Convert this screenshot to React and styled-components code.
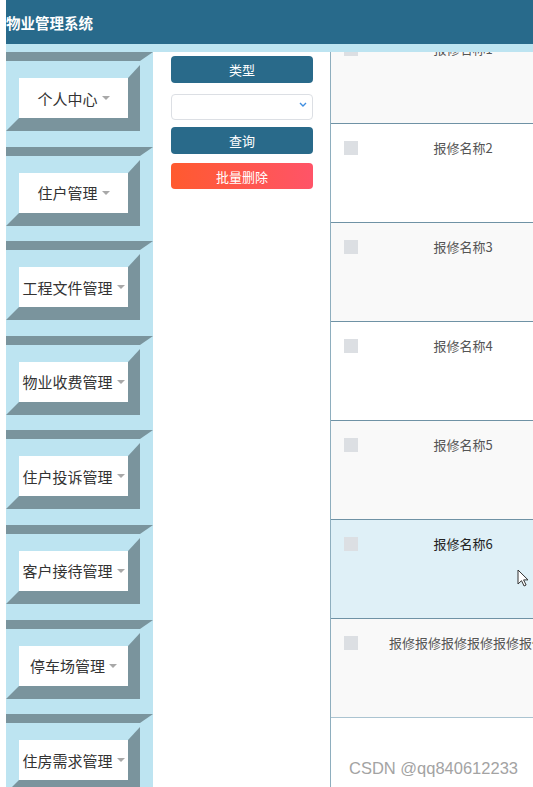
import React from 'react';
import styled, { createGlobalStyle } from 'styled-components';

const GlobalStyle = createGlobalStyle`
  html, body {
    margin: 0;
    padding: 0;
    background: #fff;
  }
  body {
    font-family: "Noto Sans CJK SC", "Noto Sans", sans-serif;
  }
`;

const Page = styled.div`
  position: relative;
  height: 787px;
  padding-left: 6px;
  overflow: hidden;
`;

const Header = styled.header`
  height: 44px;
  border-bottom: 8px solid #bde4f1;
  background: #286a8b;
  display: flex;
  align-items: center;
  color: #fff;
  font-size: 14.5px;
  font-weight: bold;
`;

const Body = styled.div`
  display: flex;
  height: 735px;
`;

const Sidebar = styled.nav`
  width: 147px;
  flex-shrink: 0;
  background: #bde4f1;
`;

const NavItem = styled.div`
  border-top: 9px solid #7a949d;
  border-right: 13px solid #bde4f1;
  padding: 4px 0 15.6px;
`;

const NavInner = styled.div`
  height: 40px;
  border-style: solid;
  border-width: 13px 12px 13px 13px;
  border-color: #bde4f1 #7a949d #7a949d #bde4f1;
  background: #fff;
  display: flex;
  align-items: center;
  justify-content: center;
  color: #333;
  font-size: 15px;
  white-space: nowrap;
`;

const Caret = styled.span`
  margin-left: 4px;
  width: 0;
  height: 0;
  border-top: 4px solid #a8a8a8;
  border-left: 4px solid transparent;
  border-right: 4px solid transparent;
`;

const Filter = styled.div`
  width: 142px;
  flex-shrink: 0;
  padding: 4px 17px 0 18px;
  display: flex;
  flex-direction: column;
  gap: 9px;
`;

const Button = styled.button`
  height: ${p => (p.$danger ? 26 : 27)}px;
  border: none;
  border-radius: 4px;
  background: ${p => (p.$danger ? 'linear-gradient(90deg, #ff5a2f, #ff5468)' : '#296a8a')};
  color: #fff;
  font-family: inherit;
  font-size: 13px;
  padding: 0;
  cursor: pointer;
`;

const SelectWrap = styled.div`
  position: relative;
  height: 26px;
`;

const Select = styled.select`
  width: 100%;
  height: 100%;
  box-sizing: border-box;
  border: 1px solid #dcdfe4;
  border-radius: 4px;
  background: #fff;
  appearance: none;
  outline: none;
`;

const Chevron = styled.svg`
  position: absolute;
  right: 6px;
  top: 10px;
  pointer-events: none;
`;

const List = styled.div`
  flex: 1;
  border-left: 1px solid #8eaebe;
  overflow: hidden;
`;

const ListInner = styled.div`
  margin-top: -27px;
`;

const Row = styled.div`
  position: relative;
  display: flex;
  align-items: flex-start;
  height: 81px;
  padding: 17px 0 0 13px;
  border-bottom: 1px solid ${p => (p.$last ? '#abc4d1' : '#6f92a5')};
  background: ${p => p.$bg};
`;

const Check = styled.span`
  width: 14px;
  height: 14px;
  flex-shrink: 0;
  background: #dcdfe3;
`;

const Name = styled.div`
  width: 148px;
  flex-shrink: 0;
  margin-left: 31px;
  text-align: center;
  white-space: nowrap;
  font-size: 13px;
  line-height: 14px;
  color: ${p => (p.$hover ? '#222' : '#555')};
`;

const Pointer = styled.svg`
  position: absolute;
  left: 186px;
  top: 49px;
`;

const Watermark = styled.div`
  position: absolute;
  right: 15px;
  top: 759px;
  font-family: "Liberation Sans", Arial, sans-serif;
  font-size: 16.5px;
  color: #a3a3a3;
  text-shadow: 0 0 2px #fff;
`;

const menus = ['个人中心', '住户管理', '工程文件管理', '物业收费管理', '住户投诉管理', '客户接待管理', '停车场管理', '住房需求管理'];

const repairs = [
  { name: '报修名称1', bg: '#f9f9f9' },
  { name: '报修名称2', bg: '#fff' },
  { name: '报修名称3', bg: '#f9f9f9' },
  { name: '报修名称4', bg: '#fff' },
  { name: '报修名称5', bg: '#f9f9f9' },
  { name: '报修名称6', bg: '#dff0f7', hover: true },
  { name: '报修报修报修报修报修报修报修报修', bg: '#f9f9f9' },
];

export default function App() {
  return (
    <Page>
      <GlobalStyle />
      <Header>物业管理系统</Header>
      <Body>
        <Sidebar>
          {menus.map(m => (
            <NavItem key={m}>
              <NavInner>
                {m}
                <Caret />
              </NavInner>
            </NavItem>
          ))}
        </Sidebar>
        <Filter>
          <Button>类型</Button>
          <SelectWrap>
            <Select defaultValue="">
              <option value=""></option>
            </Select>
            <Chevron width="8" height="5" viewBox="0 0 8 5">
              <path d="M1 1l3 3 3-3" fill="none" stroke="#3f8ee0" strokeWidth="1.4" />
            </Chevron>
          </SelectWrap>
          <Button>查询</Button>
          <Button $danger>批量删除</Button>
        </Filter>
        <List>
          <ListInner>
            {repairs.map((r, i) => (
              <Row key={i} $bg={r.bg} $last={i === repairs.length - 1}>
                <Check />
                <Name $hover={r.hover}>{r.name}</Name>
                {r.hover ? (
                  <Pointer width="12" height="18" viewBox="0 0 12 18">
                    <path d="M1 1v14l3.5-3.3 2.6 5.3 2-1-2.5-5.1H11z" fill="#fff" stroke="#333" strokeWidth="1" strokeLinejoin="round" />
                  </Pointer>
                ) : null}
              </Row>
            ))}
          </ListInner>
        </List>
      </Body>
      <Watermark>CSDN @qq840612233</Watermark>
    </Page>
  );
}
